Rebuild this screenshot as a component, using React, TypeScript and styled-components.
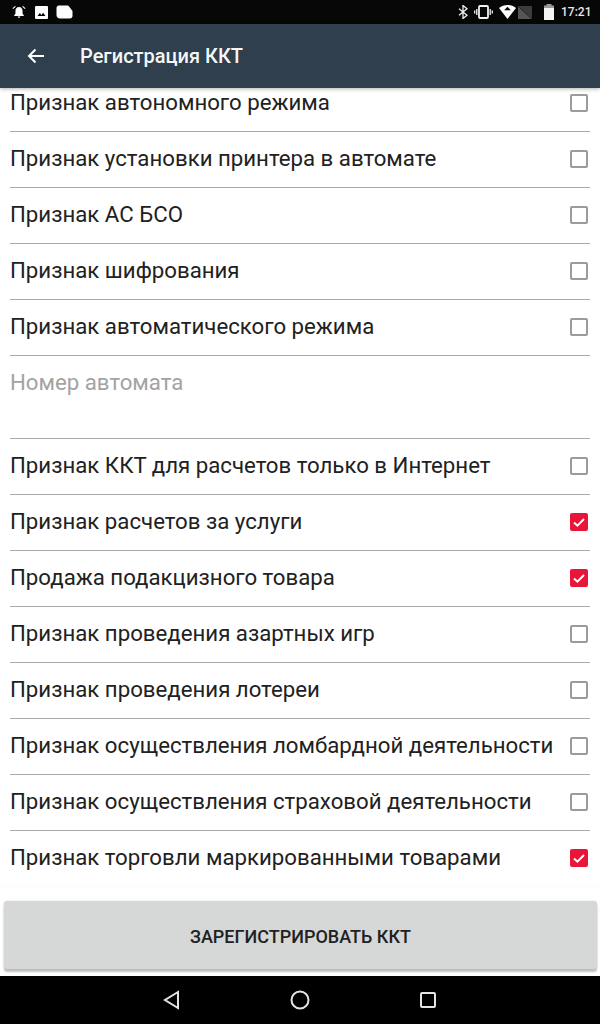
import React from "react";
import styled, { createGlobalStyle } from "styled-components";

const Global = createGlobalStyle`
  html, body { margin: 0; padding: 0; background: #fff; }
  body { font-family: Roboto, "Noto Sans", sans-serif; }
  * { box-sizing: border-box; }
`;

const Screen = styled.div`
  width: 600px;
  height: 1024px;
  display: flex;
  flex-direction: column;
  overflow: hidden;
  background: #fff;
`;

const StatusBar = styled.div`
  height: 24px;
  flex: none;
  background: #070707;
  display: flex;
  align-items: center;
  justify-content: space-between;
  padding: 0 10px 0 11px;
  color: #fff;
`;

const StatusGroup = styled.div<{ $gap: number }>`
  display: flex;
  align-items: center;
  gap: ${(p) => p.$gap}px;
`;

const BluetoothIcon = styled.svg`
  margin-right: -1px;
`;

const NetworkIcon = styled.svg`
  margin-left: -1px;
`;

const BatteryIcon = styled.svg`
  margin-left: 5px;
`;

const Clock = styled.span`
  width: 29px;
  font-size: 12px;
  font-weight: 500;
  color: #e8e8e8;
  text-align: right;
`;

const Toolbar = styled.header`
  height: 64px;
  flex: none;
  background: #2f3f4d;
  display: flex;
  align-items: center;
  padding-left: 26px;
  gap: 34px;
  position: relative;
  z-index: 2;
  box-shadow: 0 1px 4px rgba(0, 0, 0, 0.3);
`;

const Title = styled.h1`
  margin: 0;
  font-size: 20px;
  font-weight: 500;
  color: #f4f6f7;
`;

const Viewport = styled.main`
  flex: 1;
  min-height: 0;
  overflow: hidden;
  padding: 0 10px;
`;

const List = styled.div`
  margin-top: -12px;
`;

const Row = styled.div`
  height: 56px;
  display: flex;
  align-items: center;
  justify-content: space-between;
  border-bottom: 1px solid #a9a9a9;
`;

const Label = styled.span`
  font-size: 22.23px;
  color: #212121;
  white-space: nowrap;
  margin-bottom: 3px;
`;

const InputRow = styled.div`
  height: 83px;
  padding-top: 12px;
  border-bottom: 1px solid #a9a9a9;
`;

const Placeholder = styled.span`
  font-size: 22.23px;
  line-height: 28px;
  color: #a3a3a3;
`;

const Box = styled.span<{ $checked: boolean }>`
  width: 18px;
  height: 18px;
  margin: 0 2px 1px 0;
  flex: none;
  border-radius: 2px;
  display: flex;
  align-items: center;
  justify-content: center;
  background: ${(p) => (p.$checked ? "#e8173a" : "transparent")};
  border: ${(p) => (p.$checked ? "none" : "2px solid #9b9b9b")};
`;

const ButtonBar = styled.div`
  flex: none;
  height: 90px;
  padding: 15px 3px 0 4px;
  box-shadow: inset 0 3px 3px -3px rgba(0, 0, 0, 0.04);
`;

const Action = styled.button`
  width: 100%;
  height: 68px;
  border: none;
  border-radius: 3px;
  background: #d6d7d7;
  box-shadow: 0 3px 2px rgba(0, 0, 0, 0.24), 0 0 3px rgba(0, 0, 0, 0.1);
  font-family: Roboto, sans-serif;
  font-size: 18px;
  font-weight: 500;
  color: #212121;
  padding: 2px 0 0;
`;

const NavBar = styled.nav`
  height: 48px;
  flex: none;
  background: #000;
  display: flex;
  align-items: center;
  justify-content: center;
  gap: 106px;
`;

const Check = () => (
  <svg width="14" height="14" viewBox="0 0 14 14" fill="none">
    <path d="M2 7.5l3.4 3.2L12 4" stroke="#fff" strokeWidth="2" />
  </svg>
);

const rowsTop = [
  ["Признак автономного режима", false],
  ["Признак установки принтера в автомате", false],
  ["Признак АС БСО", false],
  ["Признак шифрования", false],
  ["Признак автоматического режима", false],
] as const;

const rowsBottom = [
  ["Признак ККТ для расчетов только в Интернет", false],
  ["Признак расчетов за услуги", true],
  ["Продажа подакцизного товара", true],
  ["Признак проведения азартных игр", false],
  ["Признак проведения лотереи", false],
  ["Признак осуществления ломбардной деятельности", false],
  ["Признак осуществления страховой деятельности", false],
  ["Признак торговли маркированными товарами", true],
] as const;

const CheckRow = ({ label, checked }: { label: string; checked: boolean }) => (
  <Row>
    <Label>{label}</Label>
    <Box $checked={checked}>{checked && <Check />}</Box>
  </Row>
);

export default function App() {
  return (
    <Screen>
      <Global />
      <StatusBar>
        <StatusGroup $gap={8}>
          <svg width="16" height="16" viewBox="0 0 18 18" fill="#fff">
            <path d="M9 3.500c-2.600 0-4 2-4 4.300v3.200L3.600 12.600v.8h10.800v-.8L13 11V7.800c0-2.300-1.400-4.300-4-4.300zM7.600 14.200h2.800c0 .8-.6 1.400-1.400 1.400s-1.400-.6-1.400-1.400z" />
            <path d="M4.600 2.200L1.600 4.700l.8.9 3-2.500zM13.400 2.200l-.8.9 3 2.500.8-.9z" />
          </svg>
          <svg width="13" height="13" viewBox="0 0 13 13">
            <rect width="13" height="13" rx="1" fill="#fff" />
            <path d="M2.500 10l2.300-3 1.700 2 1.600-2.200 2.400 3.200z" fill="#070707" />
          </svg>
          <svg width="17" height="14" viewBox="0 0 17 14" fill="#fff">
            <path d="M3 .5h8.500c.6 0 1.100.3 1.400.7L16.500 6v5c0 1.400-1.100 2.500-2.500 2.500H4C2 13.500.5 12 .5 10V3C.5 1.600 1.600.5 3 .5z" />
          </svg>
        </StatusGroup>
        <StatusGroup $gap={7}>
          <BluetoothIcon width="10" height="14" viewBox="0 0 10 14" fill="none" stroke="#f2f2f2" strokeWidth="1.300">
            <path d="M1 3.700l8 6.600L5 13.500V.5l4 3.200-8 6.600" />
          </BluetoothIcon>
          <svg width="19" height="14" viewBox="0 0 19 14" fill="none" stroke="#f2f2f2">
            <rect x="5" y="1" width="9" height="12" rx="1" strokeWidth="1.800" />
            <path d="M2.800 4v6M.7 5.500v3M16.200 4v6M18.300 5.500v3" strokeWidth="1.300" />
          </svg>
          <NetworkIcon width="33" height="14" viewBox="0 0 33 14">
            <path d="M0 3C2.400 1 5.400 0 8.500 0S14.600 1 17 3L8.500 14z" fill="#fff" />
            <path d="M8.500 1.800l3.300 3.500H5.200z" fill="#070707" />
            <path d="M19 1h14v13z" fill="#3c3c3c" />
            <path d="M19 1.500v12.500h13.500z" fill="#565656" />
          </NetworkIcon>
          <BatteryIcon width="10" height="16" viewBox="0 0 10 16">
            <rect x="2.500" y="0" width="5" height="2" fill="#9a9a9a" />
            <rect x="0" y="1.500" width="10" height="3" fill="#9a9a9a" />
            <rect x="0" y="4" width="10" height="12" fill="#f4f4f4" />
          </BatteryIcon>
          <Clock>17:21</Clock>
        </StatusGroup>
      </StatusBar>
      <Toolbar>
        <svg width="20" height="20" viewBox="0 0 20 20" fill="none" stroke="#fff" strokeWidth="2">
          <path d="M18 10H3M9.500 3.500L3 10l6.500 6.500" />
        </svg>
        <Title>Регистрация ККТ</Title>
      </Toolbar>
      <Viewport>
        <List>
          {rowsTop.map(([label, checked]) => (
            <CheckRow key={label} label={label} checked={checked} />
          ))}
          <InputRow>
            <Placeholder>Номер автомата</Placeholder>
          </InputRow>
          {rowsBottom.map(([label, checked]) => (
            <CheckRow key={label} label={label} checked={checked} />
          ))}
        </List>
      </Viewport>
      <ButtonBar>
        <Action>ЗАРЕГИСТРИРОВАТЬ ККТ</Action>
      </ButtonBar>
      <NavBar>
        <svg width="22" height="22" viewBox="0 0 22 22" fill="none" stroke="#e4e4e4" strokeWidth="2">
          <path d="M17 3L4 11l13 8z" />
        </svg>
        <svg width="22" height="22" viewBox="0 0 22 22" fill="none" stroke="#e4e4e4" strokeWidth="2">
          <circle cx="11" cy="11" r="8.500" />
        </svg>
        <svg width="22" height="22" viewBox="0 0 22 22" fill="none" stroke="#e4e4e4" strokeWidth="2">
          <rect x="4" y="4" width="14" height="14" rx="1" />
        </svg>
      </NavBar>
    </Screen>
  );
}
